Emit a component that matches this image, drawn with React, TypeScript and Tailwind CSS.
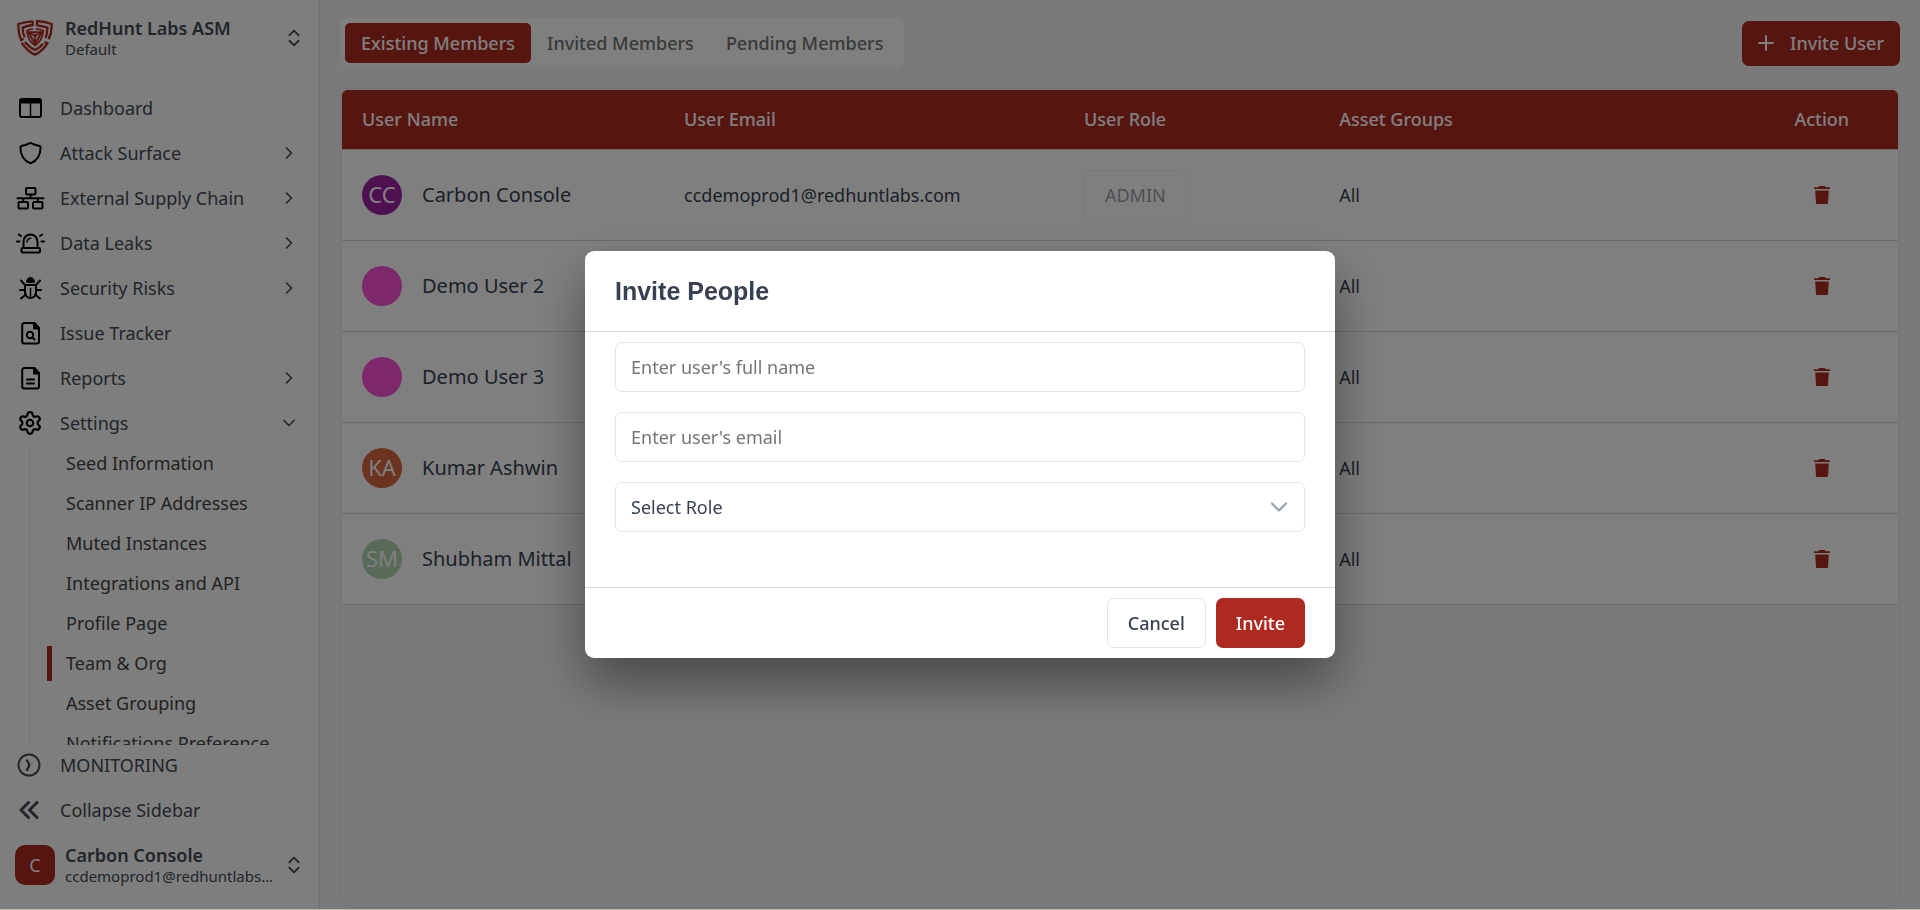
import type { ReactNode } from "react"
import { ChevronDown, ChevronRight, ChevronsUpDown, Settings } from "lucide-react"

function Logo() {
  return (
    <svg viewBox="0 0 108 108" className="size-9 shrink-0 text-[#ae2a21]" fill="none" stroke="currentColor" strokeWidth="7">
      <path d="M47 4Q22 6 4 12Q3 38 12 60L20 57" />
      <path d="M60 17V3Q85 5 104 12Q105 36 95 58" />
      <path d="M14 68Q30 94 54 104Q76 94 91 70L82 66" />
      <path d="M47 4V15Q30 17 17 23Q17 40 23 52" />
      <path d="M60 16Q78 18 91 23Q91 38 86 54" />
      <path d="M24 66Q36 82 54 90Q70 83 78 71" />
      <path d="M48 27Q38 28 30 32Q31 60 54 77Q77 60 79 32Q70 28 56 27" strokeWidth="5" />
      <path d="M34 37H75L54 71Z" strokeWidth="6" />
      <path d="M36 38L54 47L73 38M54 47V68" strokeWidth="5" />
      <circle cx="54" cy="47" r="5" fill="currentColor" stroke="none" />
      <circle cx="54" cy="71" r="5" fill="currentColor" stroke="none" />
    </svg>
  )
}

function NavIcon({ children }: { children: ReactNode }) {
  return (
    <svg viewBox="0 0 30 24" className="h-6 w-[30px] shrink-0 text-black" fill="none" stroke="currentColor" strokeWidth="2" strokeLinecap="round" strokeLinejoin="round">
      {children}
    </svg>
  )
}

function TrashIcon() {
  return (
    <svg viewBox="0 0 16 18" className="h-[18px] w-4" fill="currentColor">
      <path d="M5.2 0h5.6l.8 1.2H15.4a.6.6 0 0 1 .6.6V3H0V1.8a.6.6 0 0 1 .6-.6h3.8zM1.2 4.4h13.6L14 17a1 1 0 0 1-1 1H3a1 1 0 0 1-1-1z" />
    </svg>
  )
}

const navItems = [
  {
    label: "Dashboard",
    expandable: false,
    icon: (
      <NavIcon>
        <rect x="5" y="3" width="21" height="18" rx="2" />
        <path d="M5 4h21v3H5z" fill="currentColor" strokeWidth="1" />
        <path d="M15.5 7v14" strokeWidth="1.5" />
      </NavIcon>
    ),
  },
  {
    label: "Attack Surface",
    expandable: true,
    icon: (
      <NavIcon>
        <path d="M15.5 1.8Q19.5 4 24.6 5Q25.6 5.3 25.6 6.5C25.5 13.5 22.5 19.5 15.5 22.4C8.5 19.5 5.5 13.5 5.4 6.5Q5.4 5.3 6.4 5Q11.5 4 15.5 1.8Z" />
      </NavIcon>
    ),
  },
  {
    label: "External Supply Chain",
    expandable: true,
    icon: (
      <NavIcon>
        <rect x="11" y="2" width="9.5" height="6.5" rx="1" />
        <rect x="3.5" y="16" width="9.5" height="6.5" rx="1" />
        <rect x="18" y="16" width="9.5" height="6.5" rx="1" />
        <path d="M2.5 12.2h26M15.5 8.5v3.7M8.2 12.2V16M22.8 12.2V16" />
      </NavIcon>
    ),
  },
  {
    label: "Data Leaks",
    expandable: true,
    icon: (
      <NavIcon>
        <rect x="6.5" y="17" width="18.5" height="4.6" rx="1" />
        <path d="M8.5 16.5V10.5a7 7 0 0 1 14 0v6" />
        <path d="M12 11a3.8 3.8 0 0 1 3.8-3.8" strokeWidth="1.5" />
        <path d="M2 10.5h2.5M26.5 10.5H29M3.8 3.5L6 5M27.2 3.5L25 5" />
      </NavIcon>
    ),
  },
  {
    label: "Security Risks",
    expandable: true,
    icon: (
      <NavIcon>
        <path d="M11.5 6a4 4.6 0 0 1 8 0z" fill="currentColor" strokeWidth="1" />
        <path d="M10 9h11v7.5a5.5 5.5 0 0 1-11 0z" />
        <path d="M15.5 12.5V21" strokeWidth="1.5" />
        <path d="M5 14h5M21 14h5M6 4.5L10 9M25 4.5L21 9M6 22.5L11 18.5M25 22.5L20 18.5" />
      </NavIcon>
    ),
  },
  {
    label: "Issue Tracker",
    expandable: false,
    icon: (
      <NavIcon>
        <path d="M19.500 2H9.200A2 2 0 0 0 7.200 4v16.500a2 2 0 0 0 2 2H22a2 2 0 0 0 2-2V7z" />
        <path d="M19 2v5.500h5z" fill="currentColor" />
        <circle cx="15" cy="14" r="3.200" />
        <path d="M17.500 16.500L19.500 18.500" />
      </NavIcon>
    ),
  },
  {
    label: "Reports",
    expandable: true,
    icon: (
      <NavIcon>
        <path d="M19.5 2H9.2A2 2 0 0 0 7.2 4v16.5a2 2 0 0 0 2 2H22a2 2 0 0 0 2-2V7z" />
        <path d="M19 2v5.5h5z" fill="currentColor" />
        <path d="M12 13.5h7M12 17.5h7" />
      </NavIcon>
    ),
  },
]

const settingsItems = [
  "Seed Information",
  "Scanner IP Addresses",
  "Muted Instances",
  "Integrations and API",
  "Profile Page",
  "Team & Org",
  "Asset Grouping",
  "Notifications Preference",
]

const members = [
  { name: "Carbon Console", initials: "CC", color: "bg-[#9f20a5]", email: "ccdemoprod1@redhuntlabs.com" },
  { name: "Demo User 2", initials: "", color: "bg-[#f850d4]", email: "" },
  { name: "Demo User 3", initials: "", color: "bg-[#f850d4]", email: "" },
  { name: "Kumar Ashwin", initials: "KA", color: "bg-[#d86640]", email: "" },
  { name: "Shubham Mittal", initials: "SM", color: "bg-[#b4d4b0]", email: "" },
]

function Sidebar() {
  return (
    <aside className="flex h-full w-80 shrink-0 flex-col border-r border-[#e2e2e2] bg-[#fcfcfc] text-[#444a55]">
      <button className="mb-3 flex h-[76px] shrink-0 items-center pl-[17px] pr-[14px] text-left">
        <Logo />
        <span className="ml-3 flex-1">
          <span className="block leading-[22px] font-semibold">RedHunt Labs ASM</span>
          <span className="block text-[15px] leading-5">Default</span>
        </span>
        <ChevronsUpDown size={22} strokeWidth={2} />
      </button>

      <nav className="min-h-0 flex-1 overflow-hidden">
        <ul className="flex flex-col gap-[5px]">
          {navItems.map((item) => (
            <li key={item.label}>
              <a href="#" className="flex h-10 items-center pl-[15px] pr-5">
                {item.icon}
                <span className="ml-[15px] flex-1">{item.label}</span>
                {item.expandable && <ChevronRight size={20} strokeWidth={2} />}
              </a>
            </li>
          ))}
          <li>
            <button className="flex h-10 w-full items-center pl-[15px] pr-5 text-left">
              <span className="flex w-[30px] justify-center text-black">
                <Settings size={26} strokeWidth={2} />
              </span>
              <span className="ml-[15px] flex-1">Settings</span>
              <ChevronDown size={20} strokeWidth={2} />
            </button>
            <ul className="ml-[29px] border-l border-[#ededed] text-[#444444]">
              {settingsItems.map((label) => (
                <li key={label} className="flex h-10 items-center pl-[17px]">
                  <a
                    href="#"
                    className={`flex h-[35px] items-center border-l-[5px] pl-[14px] ${
                      label === "Team & Org" ? "border-[#ae2a21]" : "border-transparent"
                    }`}
                  >
                    {label}
                  </a>
                </li>
              ))}
            </ul>
          </li>
        </ul>
      </nav>

      <div className="flex shrink-0 flex-col gap-[5px]">
        <a href="#" className="flex h-10 items-center pl-[17px]">
          <svg viewBox="0 0 24 24" className="size-6" fill="none" stroke="currentColor" strokeWidth="2" strokeLinecap="round">
            <circle cx="12" cy="12" r="10.5" />
            <path d="M10 7.5L11.8 10.5Q12.6 12 11.8 13.5L10 17" strokeWidth="2.4" />
          </svg>
          <span className="ml-[19px]">MONITORING</span>
        </a>
        <button className="flex h-10 items-center pl-[19px]">
          <svg viewBox="0 0 20 18" className="h-[18px] w-5" fill="none" stroke="currentColor" strokeWidth="3" strokeLinecap="round" strokeLinejoin="round">
            <path d="M9.5 1.5L2 9l7.5 7.5M18 1.5L10.500 9l7.500 7.500" />
          </svg>
          <span className="ml-[21px]">Collapse Sidebar</span>
        </button>
      </div>

      <button className="mt-[15px] mb-[25px] flex h-10 shrink-0 items-center pl-[15px] pr-[14px] text-left">
        <span className="flex size-10 items-center justify-center rounded-[10px] bg-[#ae2a21] text-white">C</span>
        <span className="ml-[10px] min-w-0 flex-1">
          <span className="block leading-[22px] font-semibold">Carbon Console</span>
          <span className="block w-[210px] truncate text-[15px] leading-5">ccdemoprod1@redhuntlabs.com</span>
        </span>
        <ChevronsUpDown size={22} strokeWidth={2} className="shrink-0" />
      </button>
    </aside>
  )
}

function MembersTable() {
  return (
    <div className="mt-5 flex-1 overflow-hidden rounded-[10px] border border-[#e8e8e8] p-px">
      <table className="w-full table-fixed border-collapse text-left text-[#374151]">
        <thead>
          <tr className="h-[59px] border-b border-[#d9d9d9] bg-[#ae2a21] text-white">
            <th className="w-[20.7%] rounded-tl-[5px] px-5 font-medium">User Name</th>
            <th className="w-[25.7%] px-5 font-medium">User Email</th>
            <th className="w-[16.4%] px-5 font-medium">User Role</th>
            <th className="px-5 font-medium">Asset Groups</th>
            <th className="w-[9.8%] rounded-tr-[5px] px-5 text-center font-medium">Action</th>
          </tr>
        </thead>
        <tbody>
          {members.map((member) => (
            <tr key={member.name} className="h-[91px] border-b border-[#d9d9d9] bg-white">
              <td className="px-5">
                <div className="flex items-center gap-5 text-xl">
                  <span className={`flex size-10 shrink-0 items-center justify-center rounded-full text-[22px] text-white ${member.color}`}>
                    {member.initials}
                  </span>
                  <span className="whitespace-nowrap">{member.name}</span>
                </div>
              </td>
              <td className="px-5">{member.email}</td>
              <td className="px-5">
                <button disabled className="h-[50px] rounded-[7px] border border-[#e5e7eb] px-5 opacity-50">
                  ADMIN
                </button>
              </td>
              <td className="px-5">All</td>
              <td className="px-5">
                <button aria-label={`Remove ${member.name}`} className="mx-auto block text-[#ae2a21]">
                  <TrashIcon />
                </button>
              </td>
            </tr>
          ))}
        </tbody>
      </table>
    </div>
  )
}

function InviteDialog() {
  return (
    <div className="fixed inset-0 flex items-center justify-center border-b border-[#bdb9a8] bg-black/50">
      <form
        role="dialog"
        aria-labelledby="invite-title"
        className="w-[750px] max-w-full rounded-[9px] bg-white text-[#374151] shadow-[0_25px_50px_rgba(0,0,0,0.4)]"
      >
        <h2 id="invite-title" className="flex h-[81px] items-center border-b border-[#dcdcdc] px-[30px] font-['Liberation_Sans',sans-serif] text-[25px] font-bold">
          Invite People
        </h2>
        <div className="flex flex-col gap-5 px-[30px] pt-[10px] pb-[55px]">
          <input
            type="text"
            aria-label="Full name"
            placeholder="Enter user's full name"
            className="h-[50px] rounded-[7px] border border-[#e4e4e4] px-[15px] placeholder-[#757575]"
          />
          <input
            type="email"
            aria-label="Email"
            placeholder="Enter user's email"
            className="h-[50px] rounded-[7px] border border-[#e4e4e4] px-[15px] placeholder-[#757575]"
          />
          <div className="relative">
            <select aria-label="Role" className="h-[50px] w-full appearance-none rounded-[7px] border border-[#e4e4e4] bg-white px-[15px]">
              <option>Select Role</option>
            </select>
            <ChevronDown size={28} strokeWidth={2} className="pointer-events-none absolute top-[11px] right-3 text-[#9ca3af]" />
          </div>
        </div>
        <div className="flex justify-end gap-[10px] border-t border-[#dcdcdc] px-[30px] py-[10px] font-medium">
          <button type="button" className="h-[50px] rounded-[7px] border border-[#e4e4e4] px-5">
            Cancel
          </button>
          <button type="submit" className="h-[50px] rounded-[7px] bg-[#ae2a21] px-5 text-white">
            Invite
          </button>
        </div>
      </form>
    </div>
  )
}

export default function App() {
  return (
    <div className="flex h-screen overflow-hidden bg-[#f4f4f4] font-['Noto_Sans',sans-serif] text-lg">
      <Sidebar />
      <main className="flex min-w-0 flex-1 flex-col px-5 pt-[18px] pb-[2px]">
        <div className="flex items-center justify-between">
          <div className="flex rounded-[7px] bg-white p-[5px] font-medium text-[#737373]">
            <button className="h-10 rounded-[5px] bg-[#ae2a21] px-4 text-white">Existing Members</button>
            <button className="h-10 rounded-[5px] px-4">Invited Members</button>
            <button className="h-10 rounded-[5px] px-4">Pending Members</button>
          </div>
          <button className="flex h-[45px] items-center rounded-[7px] bg-[#ae2a21] px-4 font-medium text-white">
            <svg viewBox="0 0 16 16" className="size-4" stroke="currentColor" strokeWidth="2" strokeLinecap="round">
              <path d="M8 1v14M1 8h14" />
            </svg>
            <span className="ml-4">Invite User</span>
          </button>
        </div>
        <MembersTable />
      </main>
      <InviteDialog />
    </div>
  )
}
